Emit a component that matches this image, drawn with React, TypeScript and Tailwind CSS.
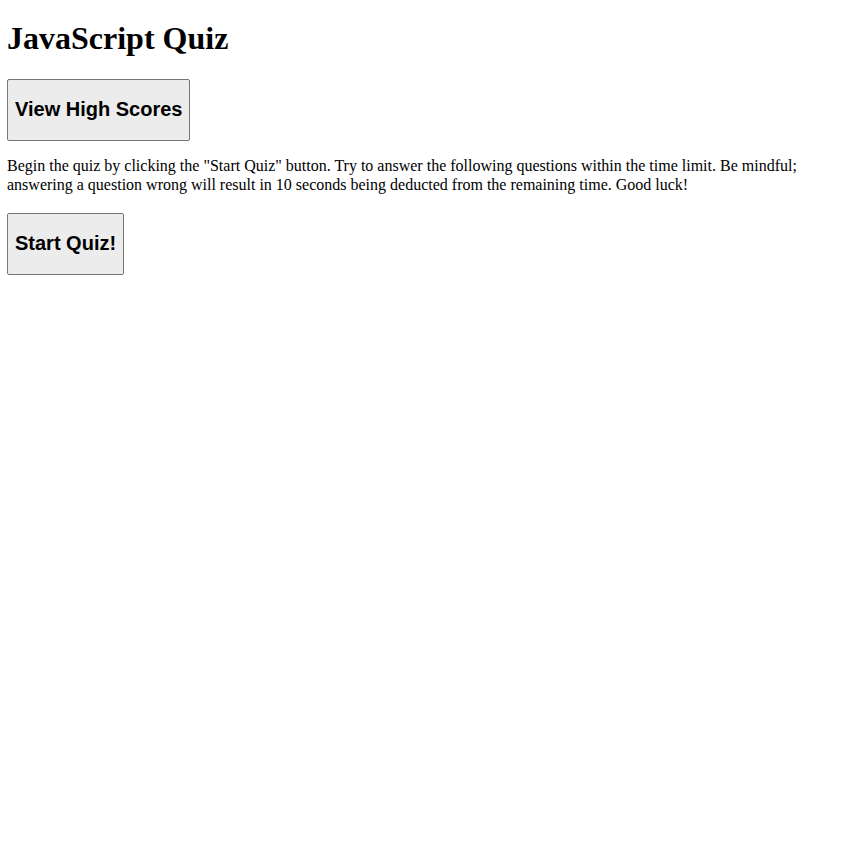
export default function App() {
  return (
    <div className="mx-[7px] my-2 font-['Liberation_Serif',serif] text-base leading-normal text-black">
      <h1 className="mt-[19.5px] mb-[22.5px] text-[32px] font-bold leading-[37px]">JavaScript Quiz</h1>

      <button className="rounded-[2px] border border-[#767676] bg-[#ececec] px-[7px] py-px">
        <h2 className="mt-[17px] mb-[18.2px] font-['Liberation_Sans',Arial,sans-serif] text-[20px] font-bold leading-[23px]">
          View High Scores
        </h2>
      </button>

      <p className="my-4 leading-[18.4px]">
        Begin the quiz by clicking the "Start Quiz" button. Try to answer the following questions within the time
        limit. Be mindful; answering a question wrong will result in 10 seconds being deducted from the remaining
        time. Good luck!
      </p>

      <div className="pt-[3px]">
        <button className="rounded-[2px] border border-[#767676] bg-[#ececec] px-[7px] py-px">
          <h2 className="mt-[17px] mb-[18.2px] font-['Liberation_Sans',Arial,sans-serif] text-[20px] font-bold leading-[23px]">
            Start Quiz!
          </h2>
        </button>
      </div>
    </div>
  )
}
